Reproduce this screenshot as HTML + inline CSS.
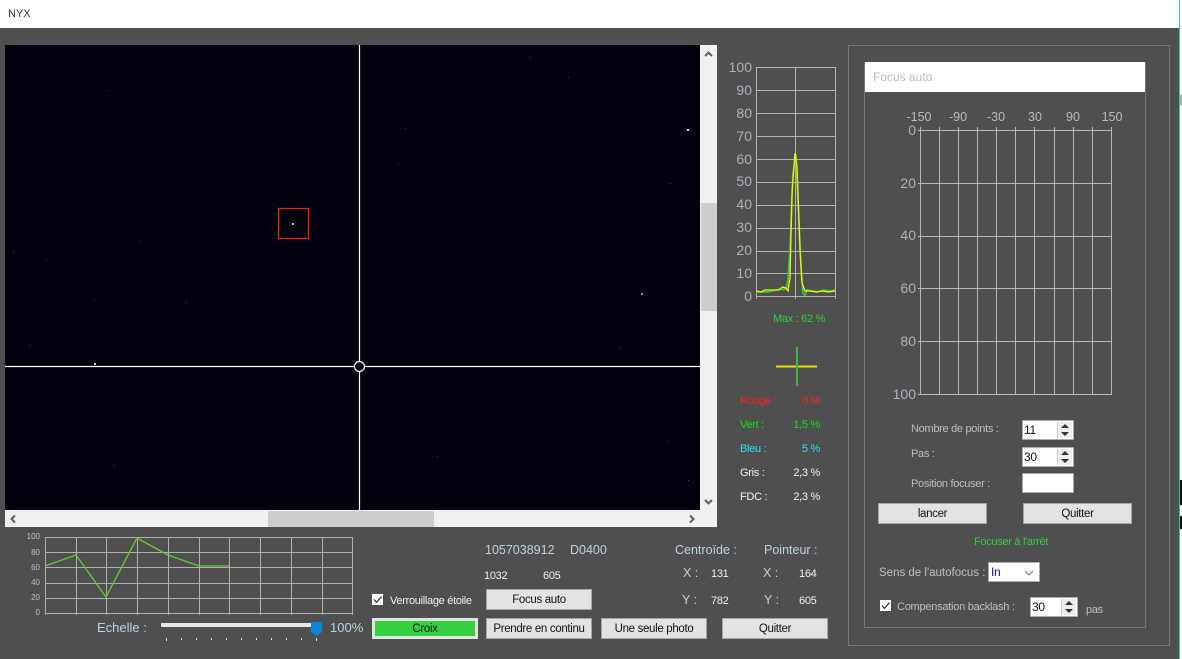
<!DOCTYPE html>
<html lang="fr"><head><meta charset="utf-8"><title>NYX</title>
<style>
html,body{margin:0;padding:0;width:1182px;height:659px;overflow:hidden;background:#4f4f4f}
body{position:relative;font-family:"Liberation Sans",sans-serif;font-size:12px}
.t{position:absolute;white-space:nowrap;line-height:14px;height:14px}
.s{font-size:11px;letter-spacing:-.3px}
.r{text-align:right}.c{text-align:center}
.b{position:absolute;box-sizing:border-box;background:#e3e3e3;border:1px solid #a6a6a6;color:#111;text-align:center;height:21px;line-height:20px;font-size:11.5px;letter-spacing:-.33px;white-space:nowrap}
.in{position:absolute;box-sizing:border-box;background:#fff;border:1px solid #aaa;color:#111;line-height:18px;padding-left:1px;font-size:12px;letter-spacing:-.3px;height:20px}
.sp{position:absolute;right:1px;top:1px;width:14px;height:16px;background:#eee;border-left:1px solid #ccc}
.sp:before,.sp:after{content:"";position:absolute;left:3px;border-left:4px solid transparent;border-right:4px solid transparent}
.sp:before{top:2px;border-bottom:4px solid #333}
.sp:after{bottom:2px;border-top:4px solid #333}
.l{color:#b9d6df}.g{color:#b9c0c4}.w{color:#f2f2f2}
svg{position:absolute;left:0;top:0}
</style></head><body>
<div style="position:absolute;left:0;top:0;width:1182px;height:28px;background:#fff"></div>
<div class="t" style="left:8px;top:7px;color:#333;font-size:11px">NYX</div>
<div style="position:absolute;left:1179px;top:28px;width:3px;height:631px;background:#fff;border-left:1px solid #35c8a0;box-sizing:border-box"></div>
<div style="position:absolute;left:1179px;top:0;width:1px;height:28px;background:#35c8a0"></div>
<div style="position:absolute;left:1180px;top:480px;width:2px;height:25px;background:#111"></div>
<div style="position:absolute;left:1180px;top:516px;width:2px;height:13px;background:#111"></div>
<div style="position:absolute;left:1180px;top:95px;width:2px;height:10px;background:#aaa"></div>

<svg width="1182" height="659" viewBox="0 0 1182 659">
<rect x="5" y="45" width="695" height="465" fill="#02020e"/>
<rect x="700" y="45" width="17" height="482" fill="#f1f1f1"/>
<rect x="5" y="510" width="712" height="17" fill="#f1f1f1"/>
<rect x="701" y="203" width="16" height="108" fill="#cdcdcd"/>
<rect x="268" y="511" width="166" height="16" fill="#cdcdcd"/>
<path d="M705 56l3.500-3.500 3.500 3.500M705 500l3.500 3.500 3.500-3.500M15 515.500l-3.500 3.500 3.500 3.500M690 515.500l3.500 3.500-3.500 3.500" fill="none" stroke="#606060" stroke-width="2"/>
<!-- stars -->
<g fill="#dfe4f2">
<rect x="687" y="129" width="2" height="2"/><rect x="94" y="363" width="2" height="2" opacity=".9"/>
<rect x="641" y="293" width="2" height="2" opacity=".6"/><rect x="292" y="223" width="2" height="2" opacity=".8"/>
</g>
<g fill="#8a90b0" opacity=".45">
<rect x="29" y="345" width="1" height="1"/><rect x="405" y="128" width="1" height="1"/><rect x="398" y="163" width="1" height="1"/>
<rect x="568" y="77" width="1" height="1"/><rect x="530" y="57" width="1" height="1"/><rect x="45" y="259" width="1" height="1"/>
<rect x="13" y="252" width="1" height="1"/><rect x="140" y="241" width="1" height="1"/><rect x="186" y="302" width="1" height="1"/>
<rect x="670" y="183" width="1" height="1"/><rect x="114" y="465" width="1" height="1"/><rect x="437" y="456" width="1" height="1"/>
<rect x="620" y="347" width="1" height="1"/><rect x="688" y="480" width="1" height="1"/><rect x="108" y="90" width="1" height="1"/>
<rect x="94" y="299" width="1" height="1"/><rect x="668" y="441" width="1" height="1"/>
</g>
<rect x="278.500" y="208.500" width="30" height="30" fill="none" stroke="#f02010" stroke-width="1.300"/>
<path d="M359.500 45V510M5 366.500H700" stroke="#fff" stroke-width="1.200"/>
<circle cx="359.500" cy="366.500" r="5" fill="#02020e" stroke="#fff" stroke-width="1.200"/>

<!-- profile chart -->
<path d="M756 67.500H835M756 90.500H835M756 113.500H835M756 136.500H835M756 159.500H835M756 182.500H835M756 205.500H835M756 228.500H835M756 251.500H835M756 273.500H835M756 296.500H835M756.500 67V299M795.500 67V299M835.500 67V299" stroke="#b4b4b4" fill="none"/>
<path d="M756 292L768 292L776 290L786 289L788 280L790 250L793 173L796 154L798 200L801 267L803 293L805 295L807 290L812 291L818 292L824 290L830 291L835 290" fill="none" stroke="#35c83c" stroke-width="1.800"/>
<path d="M756 291L761 292L765 290L772 290L778 290L783 287L786 288L788 291L790 278L792 193L795 153L797 167L800 250L802 283L805 291L810 291L816 292L822 291L828 292L835 291" fill="none" stroke="#f5ef10" stroke-width="1.300"/>
<!-- target -->
<path d="M776 366.500H817" stroke="#e8e000" stroke-width="2"/>
<path d="M797 347V386" stroke="#3cb83c" stroke-width="2"/>

<!-- mini chart -->
<path d="M45 537.500H352M45 552.500H352M45 567.500H352M45 583.500H352M45 598.500H352M45 613.500H352M45.500 537V615M76.500 537V615M106.500 537V615M137.500 537V615M168.500 537V615M199.500 537V615M229.500 537V615M260.500 537V615M291.500 537V615M322.500 537V615M352.500 537V615" stroke="#b0b0b0" fill="none"/>
<path d="M45 566L76 555L106 597L137 538L168 555L199 566L229 566" fill="none" stroke="#66cc33" stroke-width="1.300"/>
<!-- slider -->
<rect x="161" y="623" width="150" height="4" fill="#e7e7e7"/>
<path d="M311 622H322V632L316.500 636L311 632Z" fill="#0a84dc"/>
<path d="M166.500 638v3M181.500 638v2M196.500 638v2M211.500 638v2M226.500 638v2M241.500 638v2M256.500 638v2M271.500 638v2M286.500 638v2M301.500 638v2M316.500 638v3" stroke="#e0e0e0"/>

<!-- right panel -->
<rect x="848.500" y="45.500" width="321" height="600" fill="none" stroke="#777"/>
<rect x="864.500" y="62.500" width="281" height="565" fill="none" stroke="#777"/>
<rect x="865" y="62" width="280" height="30" fill="#fff"/>
<path d="M918 130.500H1112M918 183.500H1112M918 236.500H1112M918 288.500H1112M918 341.500H1112M918 394.500H1112M920.500 127V395M939.500 127V395M958.500 127V395M977.500 127V395M996.500 127V395M1015.500 127V395M1034.500 127V395M1054.500 127V395M1073.500 127V395M1092.500 127V395M1111.500 127V395" stroke="#b8b8b8" fill="none"/>
</svg>

<!-- profile labels -->
<div class="t r" style="left:716px;width:36px;top:60px;font-size:14px;color:#aab4bc">100</div>
<div class="t r" style="left:716px;width:36px;top:83px;font-size:14px;color:#aab4bc">90</div>
<div class="t r" style="left:716px;width:36px;top:106px;font-size:14px;color:#aab4bc">80</div>
<div class="t r" style="left:716px;width:36px;top:129px;font-size:14px;color:#aab4bc">70</div>
<div class="t r" style="left:716px;width:36px;top:152px;font-size:14px;color:#aab4bc">60</div>
<div class="t r" style="left:716px;width:36px;top:174px;font-size:14px;color:#aab4bc">50</div>
<div class="t r" style="left:716px;width:36px;top:197px;font-size:14px;color:#aab4bc">40</div>
<div class="t r" style="left:716px;width:36px;top:220px;font-size:14px;color:#aab4bc">30</div>
<div class="t r" style="left:716px;width:36px;top:243px;font-size:14px;color:#aab4bc">20</div>
<div class="t r" style="left:716px;width:36px;top:266px;font-size:14px;color:#aab4bc">10</div>
<div class="t r" style="left:716px;width:36px;top:289px;font-size:14px;color:#aab4bc">0</div>
<div class="t s" style="left:773px;top:312px;color:#35cc40">Max : 62 %</div>

<div class="t s" style="left:740px;top:394px;color:#ff2020">Rouge :</div>
<div class="t s r" style="left:780px;width:40px;top:394px;color:#ff2020">0 %</div>
<div class="t s" style="left:740px;top:418px;color:#10e010">Vert :</div>
<div class="t s r" style="left:780px;width:40px;top:418px;color:#10e010">1,5 %</div>
<div class="t s" style="left:740px;top:442px;color:#30e0f0">Bleu :</div>
<div class="t s r" style="left:780px;width:40px;top:442px;color:#30e0f0">5 %</div>
<div class="t s w" style="left:740px;top:466px">Gris :</div>
<div class="t s r w" style="left:780px;width:40px;top:466px">2,3 %</div>
<div class="t s w" style="left:740px;top:490px">FDC :</div>
<div class="t s r w" style="left:780px;width:40px;top:490px">2,3 %</div>

<!-- mini chart labels -->
<div class="t r g" style="left:20px;width:20px;top:530px;font-size:8px">100</div>
<div class="t r g" style="left:20px;width:20px;top:546px;font-size:8px">80</div>
<div class="t r g" style="left:20px;width:20px;top:561px;font-size:8px">60</div>
<div class="t r g" style="left:20px;width:20px;top:576px;font-size:8px">40</div>
<div class="t r g" style="left:20px;width:20px;top:591px;font-size:8px">20</div>
<div class="t r g" style="left:20px;width:20px;top:606px;font-size:8px">0</div>

<div class="t l" style="left:97px;top:621px;font-size:13px">Echelle :</div>
<div class="t l" style="left:330px;top:621px;font-size:13px">100%</div>

<!-- center info -->
<div class="t l" style="left:485px;top:543px;font-size:12.500px">1057038912</div>
<div class="t l" style="left:570px;top:543px;font-size:12.500px">D0400</div>
<div class="t l" style="left:675px;top:543px;font-size:12.500px">Centroïde :</div>
<div class="t l" style="left:764px;top:543px;font-size:12.500px">Pointeur :</div>
<div class="t s w" style="left:484px;top:569px">1032</div>
<div class="t s w" style="left:543px;top:569px">605</div>
<div class="t l" style="left:683px;top:566px;font-size:12.500px">X :</div>
<div class="t s w" style="left:711px;top:567px">131</div>
<div class="t l" style="left:763px;top:566px;font-size:12.500px">X :</div>
<div class="t s w" style="left:799px;top:567px">164</div>
<div class="t l" style="left:682px;top:593px;font-size:12.500px">Y :</div>
<div class="t s w" style="left:711px;top:594px">782</div>
<div class="t l" style="left:764px;top:593px;font-size:12.500px">Y :</div>
<div class="t s w" style="left:799px;top:594px">605</div>

<svg width="1182" height="659" viewBox="0 0 1182 659" style="pointer-events:none">
<rect x="372" y="594" width="11" height="11" fill="#fff"/>
<path d="M374 599.500l2.500 2.800 5-5.800" fill="none" stroke="#333" stroke-width="1.300"/>
<rect x="880" y="600" width="11" height="11" fill="#fff"/>
<path d="M882 605.500l2.500 2.800 5-5.800" fill="none" stroke="#333" stroke-width="1.300"/>
</svg>
<div class="t s w" style="left:390px;top:594px">Verrouillage étoile</div>

<div class="b" style="left:486px;top:589px;width:106px">Focus auto</div>
<div class="b" style="left:372px;top:618px;width:106px;border:3px solid #e3e3e3;background:#33d040;line-height:16px">Croix</div>
<div class="b" style="left:486px;top:618px;width:106px">Prendre en continu</div>
<div class="b" style="left:601px;top:618px;width:106px">Une seule photo</div>
<div class="b" style="left:722px;top:618px;width:106px">Quitter</div>

<!-- right panel text -->
<div class="t" style="left:873px;top:70px;font-size:12px;color:#c0b8c0">Focus auto</div>
<div class="t c" style="left:899px;width:40px;top:110px;font-size:12.500px;color:#b4bcc4">-150</div>
<div class="t c" style="left:938px;width:40px;top:110px;font-size:12.500px;color:#b4bcc4">-90</div>
<div class="t c" style="left:976px;width:40px;top:110px;font-size:12.500px;color:#b4bcc4">-30</div>
<div class="t c" style="left:1015px;width:40px;top:110px;font-size:12.500px;color:#b4bcc4">30</div>
<div class="t c" style="left:1053px;width:40px;top:110px;font-size:12.500px;color:#b4bcc4">90</div>
<div class="t c" style="left:1092px;width:40px;top:110px;font-size:12.500px;color:#b4bcc4">150</div>
<div class="t r" style="left:880px;width:36px;top:123px;font-size:14px;color:#aab4bc">0</div>
<div class="t r" style="left:880px;width:36px;top:176px;font-size:14px;color:#aab4bc">20</div>
<div class="t r" style="left:880px;width:36px;top:228px;font-size:14px;color:#aab4bc">40</div>
<div class="t r" style="left:880px;width:36px;top:281px;font-size:14px;color:#aab4bc">60</div>
<div class="t r" style="left:880px;width:36px;top:334px;font-size:14px;color:#aab4bc">80</div>
<div class="t r" style="left:880px;width:36px;top:387px;font-size:14px;color:#aab4bc">100</div>

<div class="t s g" style="left:911px;top:422px">Nombre de points :</div>
<div class="t s g" style="left:911px;top:447px">Pas :</div>
<div class="t s g" style="left:911px;top:477px">Position focuser :</div>
<div class="in" style="left:1022px;top:420px;width:52px">11<div class="sp"></div></div>
<div class="in" style="left:1022px;top:447px;width:52px">30<div class="sp"></div></div>
<div class="in" style="left:1022px;top:473px;width:52px"></div>
<div class="b" style="left:878px;top:503px;width:109px">lancer</div>
<div class="b" style="left:1023px;top:503px;width:109px">Quitter</div>
<div class="t s c" style="left:950px;width:122px;top:535px;color:#35cc40">Focuser à l'arrêt</div>
<div class="t g" style="left:879px;top:566px;font-size:11.500px">Sens de l'autofocus :</div>
<div class="in" style="left:988px;top:562px;width:52px;color:#14147a;padding-left:2px">In<svg width="10" height="6" viewBox="0 0 10 6" style="left:35px;top:7px"><path d="M1 1l4 4 4-4" fill="none" stroke="#777"/></svg></div>
<div class="t s g" style="left:897px;top:600px;letter-spacing:-.25px">Compensation backlash :</div>
<div class="in" style="left:1030px;top:597px;width:48px">30<div class="sp"></div></div>
<div class="t s g" style="left:1086px;top:603px">pas</div>
</body></html>
